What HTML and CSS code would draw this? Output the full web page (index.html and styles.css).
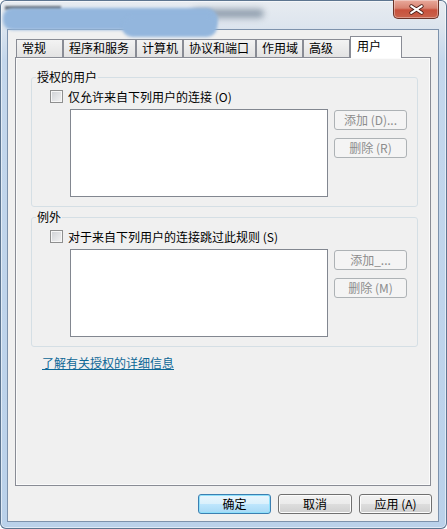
FILE: index.html
```html
<!DOCTYPE html>
<html lang="zh-CN">
<head>
  <meta charset="UTF-8">
  <title>属性</title>
  <link rel="stylesheet" href="styles.css">
</head>
<body>

  <div class="window">
    <div class="titlebar">
      <!-- blurred-out title -->
      <div class="smudge smudge-text"></div>
      <div class="smudge smudge-c"></div>
      <div class="smudge smudge-a"></div>
      <div class="smudge smudge-b"></div>
      <button class="close" title="关闭">
        <svg width="46" height="19" viewBox="0 0 46 19">
          <path d="M18 6 L29 13 M29 6 L18 13" stroke="#4a1d16" stroke-width="4" stroke-linecap="round"/>
          <path d="M18 6 L29 13 M29 6 L18 13" stroke="#ffffff" stroke-width="2.2" stroke-linecap="round"/>
        </svg>
      </button>
    </div>

    <div class="client">
      <div class="tabs">
        <div class="tab tab-sm">常规</div>
        <div class="tab tab-lg">程序和服务</div>
        <div class="tab tab-sm">计算机</div>
        <div class="tab tab-lg">协议和端口</div>
        <div class="tab tab-sm">作用域</div>
        <div class="tab tab-sm">高级</div>
        <div class="tab tab-active">用户</div>
      </div>

      <div class="panel">
        <fieldset class="group">
          <legend>授权的用户</legend>
          <label class="check-row"><span class="checkbox"></span>仅允许来自下列用户的连接 (O)</label>
          <div class="list-row">
            <div class="listbox"></div>
            <div class="side-buttons">
              <button class="btn" disabled>添加 (D)...</button>
              <button class="btn" disabled>删除 (R)</button>
            </div>
          </div>
        </fieldset>

        <fieldset class="group group-second">
          <legend>例外</legend>
          <label class="check-row"><span class="checkbox"></span>对于来自下列用户的连接跳过此规则 (S)</label>
          <div class="list-row">
            <div class="listbox"></div>
            <div class="side-buttons">
              <button class="btn" disabled>添加_...</button>
              <button class="btn" disabled>删除 (M)</button>
            </div>
          </div>
        </fieldset>

        <a class="help-link" href="#">了解有关授权的详细信息</a>
      </div>

      <div class="dialog-buttons">
        <button class="btn btn-default">确定</button>
        <button class="btn btn-wide">取消</button>
        <button class="btn">应用 (A)</button>
      </div>
    </div>
  </div>

</body>
</html>
```

FILE: styles.css
```css
body {
  margin: 0;
  background: #ffffff;
  font-family: "Noto Sans CJK SC", "Liberation Sans", sans-serif;
  font-size: 12px;
  color: #000;
}

.window {
  width: 447px;
  height: 529px;
  display: flex;
  flex-direction: column;
  border-radius: 6px;
  background: linear-gradient(to bottom, #e8ecf1 0, #dde5ee 26px, #c4d7ec 60px, #bad1ea 100%);
  box-shadow: inset 0 0 0 1px #5d7590, inset 0 0 0 2px rgba(255, 255, 255, 0.55);
  overflow: hidden;
}

/* title bar */
.titlebar {
  height: 29px;
  flex: none;
  display: flex;
  justify-content: flex-end;
  align-items: flex-start;
  padding-right: 8px;
  position: relative;
  z-index: 2;
}
.smudge {
  position: absolute;
  background: #93b6dd;
  filter: blur(1.5px);
}
.smudge-text {
  left: 5px;
  top: 6px;
  width: 56px;
  height: 4px;
  background: #3c4550;
  filter: blur(1px);
  opacity: 0.75;
}
.smudge-a {
  left: 3px;
  top: 8px;
  width: 215px;
  height: 22px;
  border-radius: 11px 14px 12px 11px;
}
.smudge-b {
  left: 122px;
  top: 16px;
  width: 95px;
  height: 21px;
  border-radius: 10px;
}
.smudge-c {
  left: 192px;
  top: 9px;
  width: 72px;
  height: 9px;
  border-radius: 5px;
  background: #7d8d9e;
  filter: blur(3px);
  opacity: 0.8;
}
.close {
  width: 46px;
  height: 19px;
  padding: 0;
  border: 1px solid #6b3328;
  border-top: none;
  border-radius: 0 0 5px 5px;
  background: linear-gradient(to bottom, #e9aa9c 0%, #d88371 45%, #c8513c 55%, #c9634c 100%);
  box-shadow: inset 0 0 0 1px rgba(255, 255, 255, 0.35);
  display: flex;
  align-items: center;
  justify-content: center;
  position: relative;
}
.close svg {
  display: block;
}

/* client area */
.client {
  flex: 1;
  margin: 0 8px 7px 7px;
  border: 1px solid #7d92ac;
  background: #f0f0f0;
  display: flex;
  flex-direction: column;
}

.tabs {
  display: flex;
  align-items: flex-end;
  height: 21px;
  margin: 6px 0 0 8px;
  position: relative;
  z-index: 1;
}
.tab {
  box-sizing: border-box;
  height: 18px;
  border: 1px solid #898c95;
  border-bottom: none;
  background: linear-gradient(to bottom, #f3f3f3, #e3e3e3);
  line-height: 16px;
  padding-left: 5px;
  white-space: nowrap;
}
.tab-sm {
  width: 47px;
}
.tab-lg {
  width: 73px;
}
.tab-active {
  width: 52px;
  height: 22px;
  margin-bottom: -1px;
  padding-left: 6px;
  background: #ffffff;
  line-height: 18px;
}

.panel {
  box-sizing: border-box;
  height: 429px;
  margin: 0 7px;
  border: 1px solid #898c95;
  background: #f0f0f0;
  box-shadow: inset 0 0 0 1px #fbfbfb;
  display: flex;
  flex-direction: column;
  align-items: flex-start;
}

/* group boxes */
.group {
  align-self: stretch;
  margin: 12px 12px 0 15px;
  padding: 5px 0 9px 18px;
  border: 1px solid #d5dfe5;
  border-radius: 3px;
  min-inline-size: 0;
}
.group-second {
  margin-top: 3px;
}
.group legend {
  padding: 0 1px;
  margin-left: -14px;
  line-height: 14px;
}
.check-row {
  display: flex;
  align-items: center;
  gap: 5px;
  height: 15px;
  white-space: nowrap;
}
.checkbox {
  box-sizing: border-box;
  width: 13px;
  height: 13px;
  border: 1px solid #8e8f8f;
  background: linear-gradient(135deg, #cdd0d4, #f4f4f4);
  box-shadow: inset 0 0 0 1px #f6f6f6;
}
.list-row {
  display: flex;
  margin: 5px 0 0 20px;
}
.listbox {
  box-sizing: border-box;
  width: 258px;
  height: 88px;
  border: 1px solid #828790;
  background: #ffffff;
}
.side-buttons {
  display: flex;
  flex-direction: column;
  gap: 8px;
  margin-left: 6px;
  padding-top: 1px;
}

/* buttons */
.btn {
  box-sizing: border-box;
  width: 73px;
  height: 20px;
  padding: 0;
  border: 1px solid #707070;
  border-radius: 3px;
  background: linear-gradient(to bottom, #f2f2f2 0%, #ebebeb 50%, #dddddd 51%, #cfcfcf 100%);
  box-shadow: inset 0 0 0 1px #fcfcfc;
  font-family: inherit;
  font-size: 12px;
  color: #000;
  line-height: 16px;
}
.btn:disabled {
  border-color: #adb2b5;
  background: #f4f4f4;
  box-shadow: none;
  color: #8c8c8c;
}
.btn-wide {
  width: 74px;
}
.btn-default {
  border-color: #3c7fb1;
  background: linear-gradient(to bottom, #eaf6fd 0%, #d9f0fc 50%, #bee6fd 51%, #a7d9f5 100%);
  box-shadow: inset 0 0 0 1px #8ee0fb;
}

.help-link {
  margin: 9px 0 0 26px;
  line-height: 14px;
  color: #0d6796;
  text-decoration: underline;
}

.dialog-buttons {
  display: flex;
  justify-content: flex-end;
  gap: 7px;
  margin-top: 8px;
  padding-right: 6px;
}
```
